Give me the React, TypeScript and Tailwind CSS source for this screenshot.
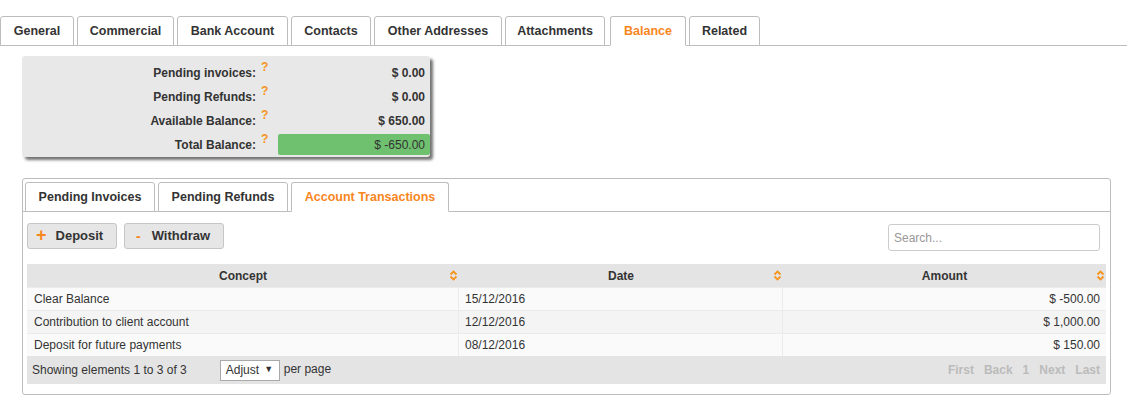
import React from "react";

const topTabs: { t: string; w: number; ml: number }[] = [
  { t: "General", w: 74, ml: 0 },
  { t: "Commercial", w: 97, ml: 3 },
  { t: "Bank Account", w: 111, ml: 3 },
  { t: "Contacts", w: 80, ml: 3 },
  { t: "Other Addresses", w: 128, ml: 3 },
  { t: "Attachments", w: 100, ml: 3 },
  { t: "Balance", w: 76, ml: 5 },
  { t: "Related", w: 71, ml: 3 },
];
const innerTabs: { t: string; w: number }[] = [
  { t: "Pending Invoices", w: 130 },
  { t: "Pending Refunds", w: 130 },
  { t: "Account Transactions", w: 158 },
];

const rows = [
  { concept: "Clear Balance", date: "15/12/2016", amount: "$ -500.00" },
  { concept: "Contribution to client account", date: "12/12/2016", amount: "$ 1,000.00" },
  { concept: "Deposit for future payments", date: "08/12/2016", amount: "$ 150.00" },
];

function SortIcon() {
  return (
    <svg width="9" height="11" viewBox="0 0 9 11" className="shrink-0">
      <path d="M1.5 4.5 L4.5 1.5 L7.5 4.5" fill="none" stroke="#f7941d" strokeWidth="1.8" />
      <path d="M1.5 6.5 L4.5 9.5 L7.5 6.5" fill="none" stroke="#f7941d" strokeWidth="1.8" />
    </svg>
  );
}

function SummaryRow({ label, value, green }: { label: string; value: string; green?: boolean }) {
  return (
    <div className="flex h-[21px] items-center">
      <div className="w-[234px] text-right font-bold text-[12px] text-[#333]">{label}</div>
      <div className="w-[22px] self-start pl-[5px] font-bold text-[12px] leading-[14px] text-[#f7941d] -mt-[2px]">?</div>
      <div
        className={
          "w-[152px] h-[21px] flex items-center justify-end pr-[5px] text-[12px] text-[#333] rounded-[2px] " +
          (green ? "bg-[#6fc06f] font-normal" : "font-bold")
        }
      >
        {value}
      </div>
    </div>
  );
}

export default function App() {
  return (
    <div className="w-[1127px] h-[417px] bg-white text-[#333] overflow-hidden" style={{ fontFamily: '"Liberation Sans", Arial, sans-serif' }}>
      {/* Top tabs */}
      <div className="pt-[16px] flex items-end border-b border-[#bdbdbd]">
        {topTabs.map(({ t, w, ml }) => {
          const active = t === "Balance";
          return (
            <div
              key={t}
              style={{ width: w, marginLeft: ml }}
              className={
                "h-[30px] -mb-px flex items-center justify-center border border-[#bdbdbd] rounded-t-[3px] bg-white font-bold text-[12.5px] " +
                (active ? "border-b-white text-[#f7861e]" : "text-[#333]")
              }
            >
              {t}
            </div>
          );
        })}
      </div>

      {/* Summary box */}
      <div className="ml-[22px] mt-[10px] w-[408px] bg-[#e8e8e8] rounded-[3px] pt-[6px] pb-[2px] flex flex-col gap-[3px] shadow-[3px_3px_3px_rgba(0,0,0,0.55)]">
        <SummaryRow label="Pending invoices:" value="$ 0.00" />
        <SummaryRow label="Pending Refunds:" value="$ 0.00" />
        <SummaryRow label="Available Balance:" value="$ 650.00" />
        <SummaryRow label="Total Balance:" value="$ -650.00" green />
      </div>

      {/* Panel */}
      <div className="ml-[22px] mt-[21px] w-[1089px] border border-[#bdbdbd] rounded-[3px] pb-[10px]">
        <div className="flex items-end gap-[3px] px-[2px] pt-[3px] border-b border-[#bdbdbd]">
          {innerTabs.map(({ t, w }) => {
            const active = t === "Account Transactions";
            return (
              <div
                key={t}
                style={{ width: w }}
                className={
                  "h-[30px] -mb-px flex items-center justify-center border border-[#bdbdbd] rounded-t-[3px] bg-white font-bold text-[12.5px] " +
                  (active ? "border-b-white text-[#f7861e]" : "text-[#333]")
                }
              >
                {t}
              </div>
            );
          })}
        </div>

        <div className="flex items-start justify-between pl-[4px] pr-[10px] mt-[11px]">
          <div className="flex gap-[7px]">
            <button className="h-[26px] w-[90px] flex items-center pl-[8px] gap-[9px] bg-[#e6e6e6] border border-[#c6c6c6] rounded-[3px] font-bold text-[13px] text-[#333]">
              <span className="text-[#f7861e] text-[18px] font-bold leading-none -mt-[2px]">+</span>
              <span>Deposit</span>
            </button>
            <button className="h-[26px] w-[100px] flex items-center pl-[11px] gap-[11px] bg-[#e6e6e6] border border-[#c6c6c6] rounded-[3px] font-bold text-[13px] text-[#333]">
              <span className="text-[#f7861e] text-[14px] font-bold leading-none">-</span>
              <span>Withdraw</span>
            </button>
          </div>
          <div className="mt-[1px] w-[212px] h-[27px] border border-[#cccccc] rounded-[3px] flex items-center pl-[5px] text-[12px] text-[#999]">
            Search...
          </div>
        </div>

        <div className="mx-[4px] mt-[13px]">
          <div className="grid grid-cols-[432px_324px_323px] h-[23px] bg-[#e4e4e4] font-bold text-[12px] text-[#333]">
            {["Concept", "Date", "Amount"].map((h) => (
              <div key={h} className="relative flex items-center justify-center">
                <span>{h}</span>
                <span className="absolute right-[1px] top-[6px]">
                  <SortIcon />
                </span>
              </div>
            ))}
          </div>
          {rows.map((r, i) => (
            <div
              key={r.concept}
              className={
                "grid grid-cols-[432px_324px_323px] h-[23px] text-[12px] text-[#333] border-t border-[#ebebeb] " +
                (i % 2 === 0 ? "bg-[#fafafa]" : "bg-[#f4f4f4]")
              }
            >
              <div className="flex items-center pl-[7px] border-r border-[#ebebeb]">{r.concept}</div>
              <div className="flex items-center pl-[6px] border-r border-[#ebebeb]">{r.date}</div>
              <div className="flex items-center justify-end pr-[6px]">{r.amount}</div>
            </div>
          ))}
          <div className="h-[28px] bg-[#e4e4e4] flex items-center text-[12px] text-[#333] pl-[5px] pr-[6px]">
            <span>Showing elements 1 to 3 of 3</span>
            <div className="ml-[33px] h-[21px] w-[60px] bg-white border border-[#a9a9a9] flex items-center pl-[5px] gap-[5px] text-[12px]">
              <span>Adjust</span>
              <span className="text-[9px]">▼</span>
            </div>
            <span className="ml-[4px] -mt-[2px]">per page</span>
            <div className="ml-auto flex gap-[10px] font-bold text-[#bbbbbb]">
              <span>First</span>
              <span>Back</span>
              <span>1</span>
              <span>Next</span>
              <span>Last</span>
            </div>
          </div>
        </div>
      </div>
    </div>
  );
}
